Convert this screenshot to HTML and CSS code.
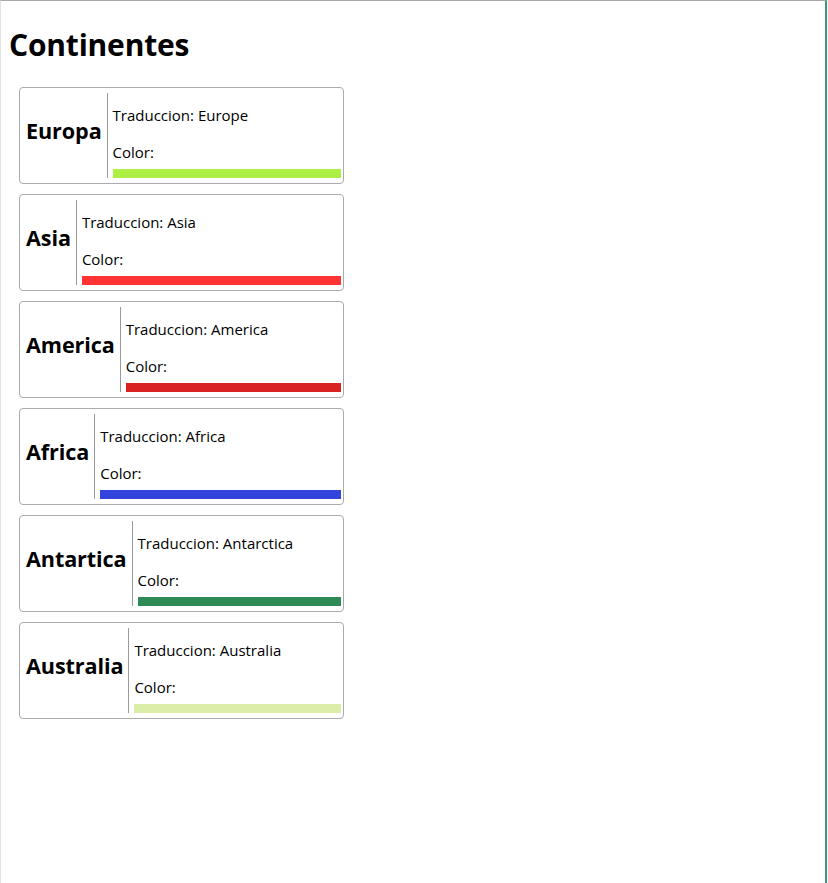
FILE: index.html
```html
<!DOCTYPE html>
<html lang="es">
<head>
<meta charset="utf-8">
<title>Continentes</title>
<link rel="stylesheet" href="styles.css">
</head>
<body>
<div class="frame">
  <div class="page">
    <h1 class="title">Continentes</h1>
    <div class="list">
      <div class="card">
        <div class="name">Europa</div>
        <div class="info">
          <div class="line first">Traduccion: Europe</div>
          <div class="line">Color:</div>
          <div class="bar c-europa"></div>
        </div>
      </div>
      <div class="card">
        <div class="name">Asia</div>
        <div class="info">
          <div class="line first">Traduccion: Asia</div>
          <div class="line">Color:</div>
          <div class="bar c-asia"></div>
        </div>
      </div>
      <div class="card">
        <div class="name">America</div>
        <div class="info">
          <div class="line first">Traduccion: America</div>
          <div class="line">Color:</div>
          <div class="bar c-america"></div>
        </div>
      </div>
      <div class="card">
        <div class="name">Africa</div>
        <div class="info">
          <div class="line first">Traduccion: Africa</div>
          <div class="line">Color:</div>
          <div class="bar c-africa"></div>
        </div>
      </div>
      <div class="card">
        <div class="name">Antartica</div>
        <div class="info">
          <div class="line first">Traduccion: Antarctica</div>
          <div class="line">Color:</div>
          <div class="bar c-antartica"></div>
        </div>
      </div>
      <div class="card">
        <div class="name">Australia</div>
        <div class="info">
          <div class="line first">Traduccion: Australia</div>
          <div class="line">Color:</div>
          <div class="bar c-australia"></div>
        </div>
      </div>
    </div>
  </div>
</div>
</body>
</html>
```

FILE: styles.css
```css
html, body {
  margin: 0;
  padding: 0;
  background: #ffffff;
}

body {
  font-family: "Open Sans", "Noto Sans", sans-serif;
  color: #000;
}

.frame {
  box-sizing: border-box;
  width: 828px;
  height: 883px;
  padding-right: 1px;
  overflow: hidden;
}

.page {
  box-sizing: border-box;
  height: 100%;
  border-top: 1px solid #a8a8a8;
  border-left: 1px solid #e2e2e2;
  border-right: 2px solid #3a9a7c;
  padding: 0 0 0 8px;
}

.title {
  margin: 0;
  padding-top: 25px;
  font-size: 30px;
  line-height: 38px;
  font-weight: 700;
  letter-spacing: -0.2px;
}

.list {
  display: flex;
  flex-direction: column;
  gap: 10px;
  margin-top: 23px;
  padding-left: 10px;
}

.card {
  box-sizing: border-box;
  width: 325px;
  height: 97px;
  border: 1px solid #ababab;
  border-radius: 4px;
  padding: 5px 2px 5px 6px;
  display: flex;
  align-items: stretch;
}

.name {
  display: flex;
  align-items: center;
  padding-right: 5px;
  padding-bottom: 11px;
  border-right: 1px solid #9a9a9a;
  font-size: 21.6px;
  font-weight: 700;
  letter-spacing: -0.1px;
  white-space: nowrap;
}

.info {
  flex: 1;
  display: flex;
  flex-direction: column;
  padding-left: 5px;
  font-size: 15px;
  line-height: 22px;
  letter-spacing: 0;
}

.line.first {
  margin-top: 11px;
  margin-bottom: 15px;
}

.bar {
  height: 10px;
  margin-top: 6px;
}

.c-europa { background: #adef44; }
.c-asia { background: #ff3333; }
.c-america { background: #d92222; }
.c-africa { background: #3344dd; }
.c-antartica { background: #2e8b57; }
.c-australia { background: #dcedaa; }
```
